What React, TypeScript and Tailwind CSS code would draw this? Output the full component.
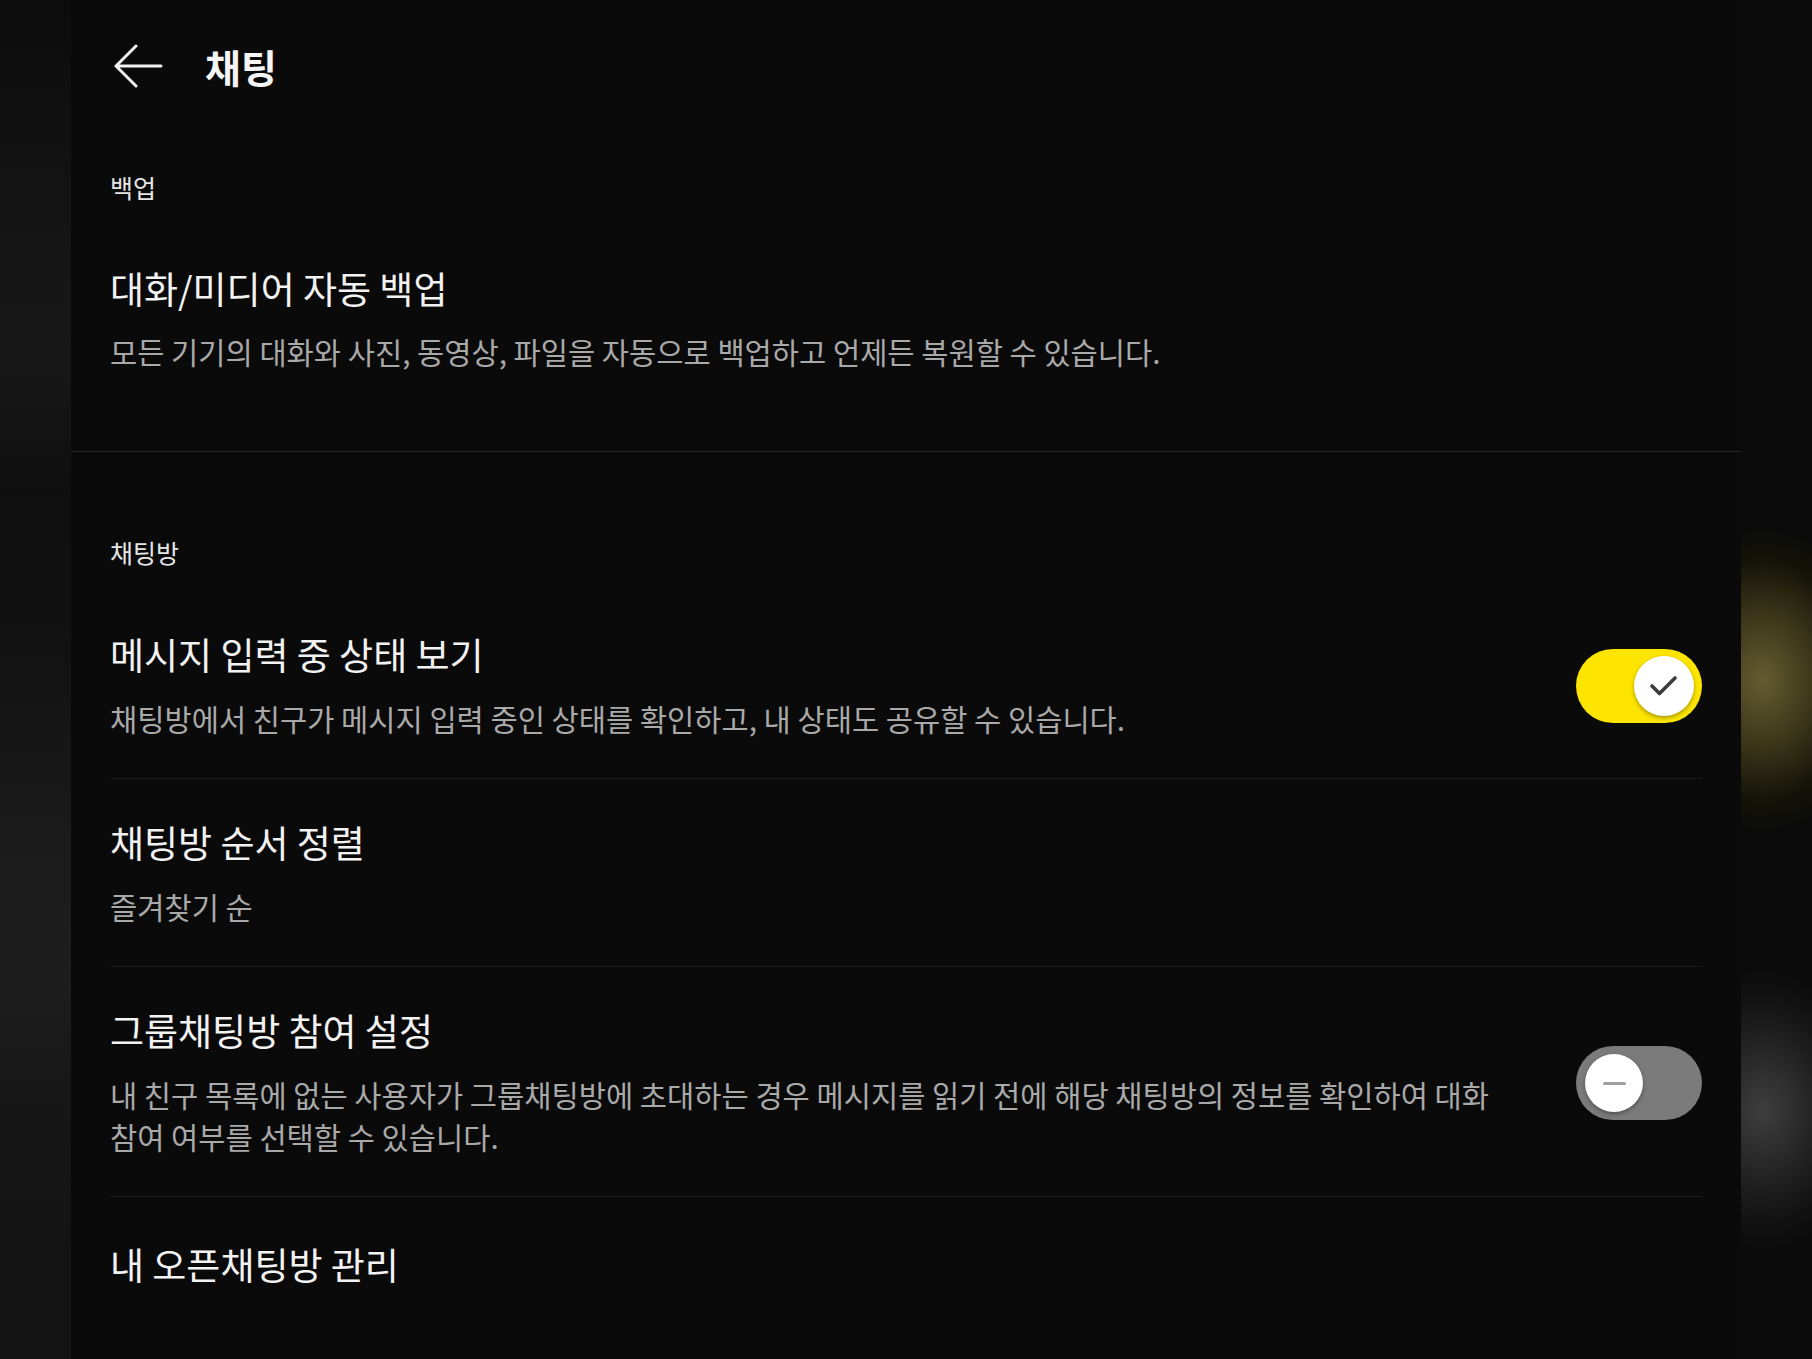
import React from "react";

const font = "font-['Noto_Sans_CJK_KR','Noto_Sans',sans-serif]";

function ToggleOn() {
  return (
    <div className="relative w-[126px] h-[74px] shrink-0 rounded-full bg-[#fee500]">
      <div className="absolute right-[8px] top-[7px] w-[60px] h-[60px] rounded-full bg-white shadow-[0_2px_4px_rgba(0,0,0,0.35)] flex items-center justify-center">
        <svg width="60" height="60" viewBox="0 0 60 60">
          <path d="M18 30 L25.5 37.5 L41 22" fill="none" stroke="#3c3c3c" strokeWidth="3.6" strokeLinecap="round" strokeLinejoin="round" />
        </svg>
      </div>
    </div>
  );
}

function ToggleOff() {
  return (
    <div className="relative w-[126px] h-[74px] shrink-0 rounded-full bg-[#7b7b7b]">
      <div className="absolute left-[9px] top-[8px] w-[58px] h-[58px] rounded-full bg-white shadow-[0_2px_4px_rgba(0,0,0,0.35)] flex items-center justify-center">
        <div className="w-[23px] h-[3px] rounded-full bg-[#a0a0a0]" />
      </div>
    </div>
  );
}

function Row({
  title,
  desc,
  toggle,
}: {
  title: string;
  desc?: React.ReactNode;
  toggle?: "on" | "off";
}) {
  return (
    <div className="flex items-center gap-[46px] pt-[41px] pb-[38px] border-b border-[#1c1c1c]">
      <div className="flex-1 min-w-0">
        <div className="text-[37px] leading-[44px] text-[#f2f2f2]">{title}</div>
        {desc && <div className="mt-[22px] text-[29.6px] leading-[42px] text-[#a9a9a9] break-keep">{desc}</div>}
      </div>
      {toggle === "on" && <ToggleOn />}
      {toggle === "off" && <ToggleOff />}
    </div>
  );
}

export default function App() {
  return (
    <div className={`w-[1812px] h-[1359px] overflow-hidden flex bg-[#0c0c0c] ${font}`}>
      <div className="w-[71px] shrink-0 bg-[linear-gradient(180deg,#0c0c0c_0%,#151515_18%,#181818_26%,#0f0f0f_36%,#121212_48%,#1b1b1b_62%,#1d1d1d_72%,#151515_84%,#131313_100%)]" />
      <main className="w-[1670px] shrink-0 bg-[#0a0a0a] flex flex-col">
        <header className="h-[132px] shrink-0 flex items-center pl-[42px]">
          <svg width="50" height="44" viewBox="0 0 50 44" className="shrink-0">
            <path d="M48 22 H3 M23 2 L3 22 L23 42" fill="none" stroke="#f2f2f2" strokeWidth="3" strokeLinecap="round" strokeLinejoin="round" />
          </svg>
          <h1 className="ml-[42px] text-[39px] leading-[48px] font-bold text-[#f5f5f5]">채팅</h1>
        </header>

        <section className="px-[39px] pt-[39px] pb-[40px] border-b border-[#262626]">
          <div className="text-[25px] leading-[32px] text-[#e6e6e6]">백업</div>
          <div className="mt-[22px] pt-[41px] pb-[38px]">
            <div className="text-[37px] leading-[44px] text-[#f2f2f2]">대화/미디어 자동 백업</div>
            <div className="mt-[21px] text-[29.6px] leading-[42px] text-[#a9a9a9] break-keep">
              모든 기기의 대화와 사진, 동영상, 파일을 자동으로 백업하고 언제든 복원할 수 있습니다.
            </div>
          </div>
        </section>

        <section className="px-[39px] pt-[84px]">
          <div className="text-[25px] leading-[32px] text-[#e6e6e6]">채팅방</div>
          <div className="mt-[23px]">
            <Row
              title="메시지 입력 중 상태 보기"
              desc="채팅방에서 친구가 메시지 입력 중인 상태를 확인하고, 내 상태도 공유할 수 있습니다."
              toggle="on"
            />
            <Row title="채팅방 순서 정렬" desc="즐겨찾기 순" />
            <Row
              title="그룹채팅방 참여 설정"
              desc="내 친구 목록에 없는 사용자가 그룹채팅방에 초대하는 경우 메시지를 읽기 전에 해당 채팅방의 정보를 확인하여 대화 참여 여부를 선택할 수 있습니다."
              toggle="off"
            />
            <div className="pt-[45px]">
              <div className="text-[37px] leading-[44px] text-[#f2f2f2]">내 오픈채팅방 관리</div>
            </div>
          </div>
        </section>
      </main>
      <div className="flex-1 bg-[#0b0b0b] bg-[radial-gradient(120px_150px_at_30%_680px,#645c31,#3a3519_45%,#141308_80%,transparent),radial-gradient(110px_140px_at_30%_1110px,#3e3e3e,#222_50%,#121212_80%,transparent)]" />
    </div>
  );
}
